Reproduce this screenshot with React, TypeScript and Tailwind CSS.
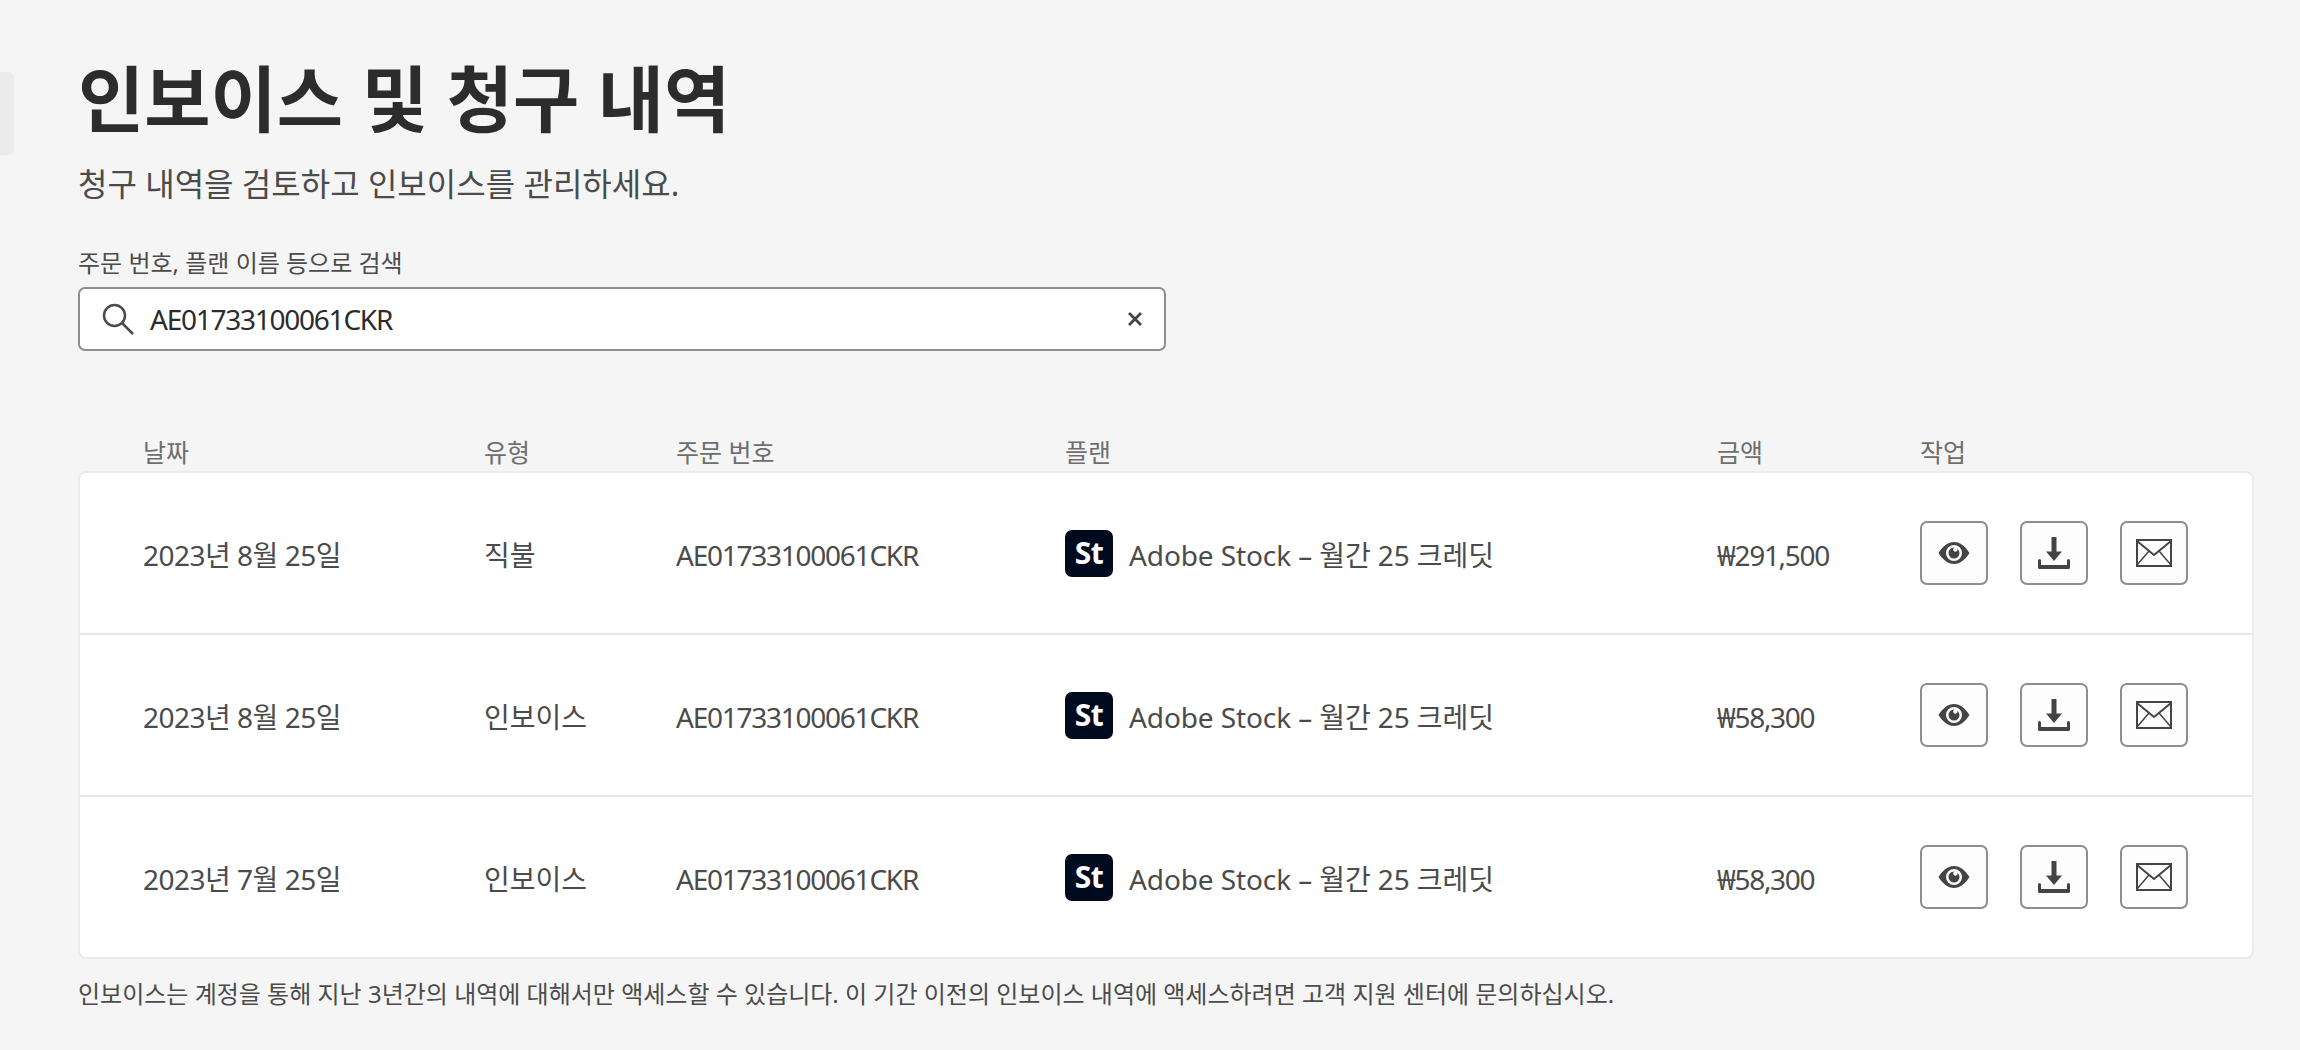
import React from "react";

const rows = [
  { date: "2023년 8월 25일", type: "직불", amount: "₩291,500" },
  { date: "2023년 8월 25일", type: "인보이스", amount: "₩58,300" },
  { date: "2023년 7월 25일", type: "인보이스", amount: "₩58,300" },
];

const gridCols = "grid grid-cols-[341px_192px_389px_652px_203px_1fr]";

const EyeIcon = () => (
  <svg width="32" height="24" viewBox="0 0 32 24">
    <path
      fillRule="evenodd"
      fill="#444"
      d="M0.5 12C4.5 5.5 10 1 16 1S27.500 5.500 31.500 12C27.500 18.500 22 23 16 23S4.500 18.500 0.500 12ZM16 4A8 8 0 1 0 16 20A8 8 0 1 0 16 4Z"
    />
    <path
      fill="#444"
      d="M16 6.500A5.500 5.500 0 1 0 21.500 12A5.500 5.500 0 0 0 19.400 7.700A2.200 2.200 0 1 1 16.500 6.500Z"
    />
  </svg>
);

const DownloadIcon = () => (
  <svg width="32" height="32" viewBox="0 0 32 32">
    <path fill="#444" d="M13.500 0H18.500V14.500H24L16 24L8 14.500H13.500Z" />
    <path fill="#444" d="M0 23.500A1.500 1.500 0 0 1 3 23.500V28H29V23.500A1.500 1.500 0 0 1 32 23.500V30.500A1.500 1.500 0 0 1 30.500 32H1.500A1.500 1.500 0 0 1 0 30.500Z" />
  </svg>
);

const MailIcon = () => (
  <svg width="36" height="28" viewBox="0 0 36 28" fill="none" stroke="#444">
    <rect x="1" y="1" width="34" height="26" strokeWidth="2" />
    <path d="M1 2L18 16L35 2" strokeWidth="2" />
    <path d="M1 26L13 12M35 26L23 12" strokeWidth="1.500" />
  </svg>
);

const ActionButton = ({ children }: { children: React.ReactNode }) => (
  <button className="flex items-center justify-center w-[68px] h-[64px] bg-[#fdfdfd] border-2 border-[#8e8e8e] rounded-[7px]">
    {children}
  </button>
);

const App = () => {
  return (
    <div className="relative w-[2300px] h-[1050px] overflow-hidden bg-[#f5f5f5] pl-[78px] pr-[46px] font-['Noto_Sans','Noto_Sans_CJK_KR',sans-serif] text-[#4b4b4b]">
      <div className="absolute left-0 top-[72px] w-[14px] h-[83px] bg-[#ebebeb] rounded-r-[6px]" />

      <h1 className="pt-[48px] text-[72px] leading-[100px] font-bold text-[#2c2c2c]">
        인보이스 및 청구 내역
      </h1>
      <p className="mt-[11px] text-[32px] leading-[50px] text-[#4b4b4b]">
        청구 내역을 검토하고 인보이스를 관리하세요.
      </p>

      <label className="block mt-[36px] text-[24px] leading-[36px] text-[#4b4b4b]">
        주문 번호, 플랜 이름 등으로 검색
      </label>
      <div className="flex items-center mt-[6px] w-[1088px] h-[64px] bg-white border-2 border-[#8e8e8e] rounded-[7px] pl-[22px] pr-[21px]">
        <svg width="32" height="32" viewBox="0 0 32 32" fill="none" stroke="#4b4b4b" strokeWidth="2.500">
          <circle cx="12.500" cy="12.500" r="10.500" />
          <path d="M20 20L31 31" />
        </svg>
        <span className="ml-[16px] flex-1 text-[28px] leading-[40px] text-[#2c2c2c] tracking-[-1.25px]">
          AE01733100061CKR
        </span>
        <svg width="16" height="16" viewBox="0 0 16 16" stroke="#444" strokeWidth="2.800">
          <path d="M2 2L14 14M14 2L2 14" />
        </svg>
      </div>

      <div className={`${gridCols} mt-[84px] pl-[65px] h-[36px] text-[25px] leading-[34px] text-[#6e6e6e]`}>
        <span>날짜</span>
        <span>유형</span>
        <span>주문 번호</span>
        <span>플랜</span>
        <span>금액</span>
        <span>작업</span>
      </div>

      <div className="w-[2176px] bg-white border-2 border-[#ebebeb] rounded-[8px]">
        {rows.map((row, i) => (
          <div
            key={i}
            className={`${gridCols} items-center pl-[63px] text-[28px] text-[#4b4b4b] ${
              i > 0 ? "h-[162px] border-t-2 border-[#e8e8e8]" : "h-[160px]"
            }`}
          >
            <span className="mt-[3px] tracking-[-0.5px]">{row.date}</span>
            <span className="mt-[3px]">{row.type}</span>
            <span className="mt-[3px] tracking-[-1.25px]">AE01733100061CKR</span>
            <div className="flex items-center">
              <div className="flex items-center justify-center w-[48px] h-[47px] bg-[#000a1f] rounded-[7px] text-white text-[30px] font-bold leading-none tracking-[-0.5px]">
                St
              </div>
              <span className="mt-[3px] ml-[16px] tracking-[-0.1px]">Adobe Stock – 월간 25 크레딧</span>
            </div>
            <span className="mt-[3px] tracking-[-1.3px]">{row.amount}</span>
            <div className="flex gap-[32px]">
              <ActionButton>
                <EyeIcon />
              </ActionButton>
              <ActionButton>
                <DownloadIcon />
              </ActionButton>
              <ActionButton>
                <MailIcon />
              </ActionButton>
            </div>
          </div>
        ))}
      </div>

      <p className="mt-[17px] text-[24px] leading-[36px] text-[#4b4b4b]">
        인보이스는 계정을 통해 지난 3년간의 내역에 대해서만 액세스할 수 있습니다. 이 기간 이전의 인보이스 내역에 액세스하려면 고객 지원 센터에 문의하십시오.
      </p>
    </div>
  );
};

export default App;
